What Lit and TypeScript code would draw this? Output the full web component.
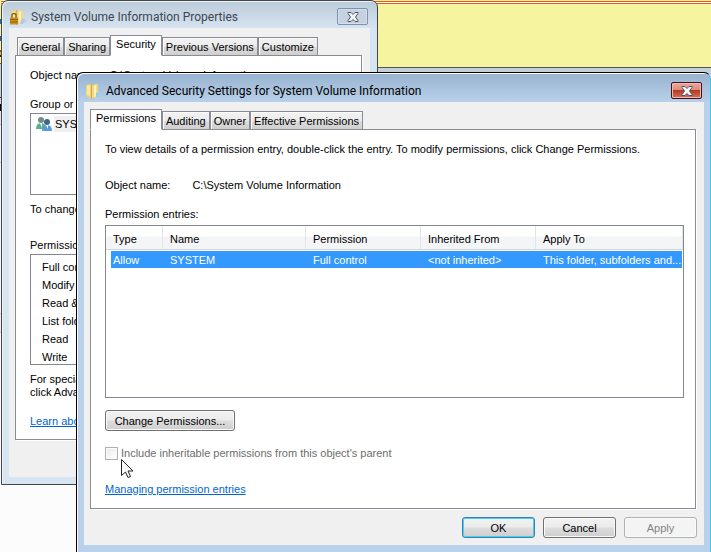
import { LitElement, html, css, svg } from "lit";
import { customElement, property } from "lit/decorators.js";

const folder = svg`
  <path d="M2 2l5-1v14l-5-2z" fill="#efd277"/>
  <path d="M7 1l2 1v13l-2 1z" fill="#d2a93f"/>
  <path d="M8 2l5-1 1 1v12l-6 1z" fill="#f1da84"/>
  <path d="M3 3l3-1v11l-3-1z" fill="#f9e9a6"/>
  <path d="M10 3l2-1v11l-2 1z" fill="#fbf1c0"/>`;

@customElement("win-frame")
export class WinFrame extends LitElement {
  @property() heading = "";
  @property({ type: Boolean, reflect: true }) active = false;
  @property({ type: Boolean }) locked = false;

  static styles = css`
    :host {
      display: flex;
      flex-direction: column;
      box-sizing: border-box;
      border: 1px solid #454545;
      border-radius: 7px 7px 0 0;
      background: linear-gradient(#bccbd9, #d7e4f2 28px);
      box-shadow: inset 1px 1px 0 #eef4fa;
      padding: 0 7px 7px;
    }
    :host([active]) {
      border-color: #000 #3fc8ea #000 #000;
      background: linear-gradient(#98b3d0, #b9d1ea 30px);
      box-shadow: inset 1px 1px 0 #fff;
      padding-right: 6px;
    }
    header {
      display: flex;
      align-items: center;
      height: 27px;
      padding-top: 4px;
      box-sizing: border-box;
    }
    :host([active]) header {
      height: 29px;
      padding-top: 6px;
    }
    header svg {
      flex: none;
    }
    h1 {
      flex: 1;
      margin: 0 0 0 4px;
      font: 12px/16px Roboto, "Noto Sans", sans-serif;
      color: #3c4650;
      white-space: nowrap;
    }
    :host([active]) h1 {
      color: #000;
    }
    .close {
      display: grid;
      place-items: center;
      width: 31px;
      height: 17px;
      margin-right: 2px;
      padding: 0;
      border: 1px solid #8291ab;
      border-radius: 2px;
      background: #c4d2e1;
      box-shadow: inset 0 0 0 1px #d3dfeb;
    }
    :host([active]) .close {
      border-color: #42101f;
      background: linear-gradient(#e7a99d, #dd8a7b 48%, #b73a20 50%, #cf7462);
      box-shadow: inset 0 0 0 1px #f0b9ae;
    }
    main {
      flex: 1;
      display: flex;
      flex-direction: column;
      background: #f0f0f0;
    }
  `;

  render() {
    return html`
      <header>
        <svg width="18" height="16" viewBox="0 0 18 16" aria-hidden="true">
          ${folder}
          ${this.locked
            ? svg`<path d="M12 10l3-1 2 3-3 3h-3z" fill="#b9cbd9"/>
                <path d="M3 9V6.500a2 2 0 0 1 4 0V9" fill="none" stroke="#8a6a1c" stroke-width="1.500"/>
                <rect x="1" y="8.500" width="8" height="7" fill="#c8921c"/>
                <path d="M1 10.500h8M1 13h8" stroke="#8d5f0c"/>`
            : svg`<path d="M12 10l2-1v5h-2z" fill="#8fd0e6"/>`}
        </svg>
        <h1>${this.heading}</h1>
        <button class="close" aria-label="Close">
          <svg width="12" height="10" viewBox="0 0 12 10" aria-hidden="true">
            <path d="M1 .5h3l2 2 2-2h3v1L8.500 5 11 8.500v1H8l-2-2-2 2H1v-1L3.500 5 1 1.500z"
              fill="#f4f4f4" stroke="#4c5468"/>
          </svg>
        </button>
      </header>
      <main><slot></slot></main>
    `;
  }
}

@customElement("tab-strip")
export class TabStrip extends LitElement {
  @property({ type: Array }) tabs: string[] = [];
  @property() selected = "";

  static styles = css`
    :host {
      display: flex;
      align-items: flex-end;
      position: relative;
      z-index: 1;
      padding-left: 2px;
      margin-bottom: -1px;
    }
    button {
      height: 19px;
      margin: 0;
      padding: 0 3px;
      border: 1px solid #898c95;
      background: linear-gradient(#f3f3f3, #ebebeb 50%, #dddddd 51%, #cfcfcf);
      box-shadow: inset 1px 1px 0 #fcfcfc;
      font: 11px/16px "Liberation Sans", Arial, sans-serif;
      color: #000;
      white-space: nowrap;
    }
    .on {
      height: 21px;
      padding: 0 5px 3px;
      border-bottom-color: #fff;
      background: #fff;
    }
    .on:first-child {
      margin-left: -2px;
    }
  `;

  render() {
    return this.tabs.map(
      (t) => html`<button role="tab" aria-selected=${t === this.selected} class=${t === this.selected ? "on" : ""}>${t}</button>`
    );
  }
}

@customElement("app-root")
export class AppRoot extends LitElement {
  static styles = css`
    :host {
      display: block;
      position: relative;
      min-height: 100vh;
      overflow: hidden;
      background: #fcfcfc;
      font: 11px/13px "Liberation Sans", Arial, sans-serif;
      color: #000;
    }
    .sheet {
      height: 68px;
      box-sizing: border-box;
      border-bottom: 1px solid #555;
      background: linear-gradient(#f6f49f 1px, #e85a1c 1px 2px, #fff 2px 3px, #e85a1c 3px 4px, #f6f49f 4px);
    }
    .bar {
      height: 57px;
      background: #c3d0dc;
    }
    .edge {
      position: absolute;
      left: 0;
      top: 0;
      width: 1px;
      height: 335px;
      background: linear-gradient(
        #f6f49f 19px, #1f6fa8 19px 24px, #f6f49f 24px 36px, #2a62b0 36px 41px, #f6f49f 41px 50px,
        #c33a1c 50px 52px, #f0b030 52px 55px, #222 55px 57px, #f6f49f 57px 63px, #555 63px 64px,
        #b9cfe6 64px 97px, #333 97px 98px, #c9d8e8 98px 104px, #000 104px 111px, #dbe6f2 111px 124px,
        #a9bccf 124px 125px, #eaf1f8 125px 162px, #b5c5d6 162px 163px, #f4f7fa 163px 313px,
        #d0d0d0 313px 314px, #eee 314px 332px, #d0d0d0 332px 333px, #fcfcfc 333px);
    }
    .back {
      position: absolute;
      left: 1px;
      top: 0;
      width: 377px;
      height: 485px;
    }
    .front {
      position: absolute;
      left: 76px;
      right: 0;
      top: 72px;
      height: 481px;
    }
    p {
      margin: 0;
      white-space: nowrap;
    }
    a {
      color: #0066cc;
    }
    .body {
      flex: 1;
      display: flex;
      flex-direction: column;
      padding: 7px 7px 0 6px;
    }
    .panel {
      display: flex;
      flex-direction: column;
      align-items: flex-start;
      box-sizing: border-box;
      margin-right: 1px;
      border: 1px solid #898c95;
      background: #fff;
      box-shadow: 1px 1px 0 #fff;
      padding: 13px 11px 0 14px;
    }
    .back .panel {
      height: 385px;
    }
    .front .panel {
      height: 380px;
    }
    .pair {
      display: flex;
      gap: 22px;
    }
    .back .pair {
      gap: 14px;
    }
    .box {
      align-self: stretch;
      box-sizing: border-box;
      margin: 0;
      padding: 0;
      border: 1px solid #828790;
      list-style: none;
    }
    .users {
      height: 82px;
      padding: 2px 5px;
    }
    .users li {
      display: flex;
      align-items: center;
      gap: 1px;
    }
    .users span {
      background: #f0f0f0;
      line-height: 16px;
      padding: 0 1px;
    }
    .rights {
      height: 111px;
      padding: 3px 11px;
      line-height: 18px;
    }
    .gap-s { margin-top: 2px; }
    .gap-m { margin-top: 8px; }
    .gap-l { margin-top: 16px; }
    .gap-xl { margin-top: 23px; }
    .entries {
      height: 173px;
      margin-top: 4px;
    }
    table {
      width: 100%;
      table-layout: fixed;
      border-collapse: separate;
      border-spacing: 0;
    }
    th, td {
      padding: 0 0 0 7px;
      font-weight: normal;
      text-align: left;
      white-space: nowrap;
      overflow: hidden;
    }
    th {
      height: 24px;
      box-sizing: border-box;
      padding-top: 3px;
      border-right: 1px solid #e2e4e7;
      border-bottom: 1px solid #d5d5d5;
      background: linear-gradient(#fff 45%, #f4f5f6 46%);
    }
    td {
      height: 17px;
      padding-top: 1px;
      box-sizing: border-box;
      height: 18px;
      border-top: 1px solid #fff;
      background: #3399ff;
      color: #fff;
    }
    td:first-child {
      border-left: 5px solid #fff;
      padding-left: 2px;
    }
    td:last-child {
      border-right: 1px solid #fff;
    }
    .c1 { width: 57px; }
    .c2 { width: 143px; }
    .c3, .c4 { width: 115px; }
    .btn {
      width: 73px;
      height: 21px;
      padding: 0;
      border: 1px solid #707070;
      border-radius: 3px;
      background: linear-gradient(#f2f2f2, #ebebeb 49%, #dddddd 51%, #cfcfcf);
      box-shadow: inset 0 0 0 1px #fafafa;
      font: 11px/16px "Liberation Sans", Arial, sans-serif;
      color: #000;
    }
    .btn.wide {
      width: 130px;
      margin-top: 12px;
    }
    .btn.main {
      border-color: #3c7fb1;
      box-shadow: inset 0 0 0 1px #48d0f5;
    }
    .btn:disabled {
      border-color: #adb2b5;
      background: #f4f4f4;
      color: #838383;
    }
    .check {
      display: flex;
      align-items: center;
      gap: 3px;
      margin-top: 16px;
      color: #6d6d6d;
      white-space: nowrap;
    }
    .check input {
      appearance: none;
      width: 13px;
      height: 13px;
      margin: 0;
      border: 1px solid #b1b1b1;
      background: linear-gradient(135deg, #ebebeb, #fff);
      box-shadow: inset 0 0 0 1px #fafafa;
    }
    footer {
      display: flex;
      justify-content: flex-end;
      gap: 8px;
      padding-top: 8px;
    }
    .cursor {
      position: absolute;
      left: 121px;
      top: 459px;
    }
  `;

  render() {
    return html`
      <div class="sheet"></div>
      <div class="bar"></div>
      <div class="edge"></div>

      <win-frame class="back" heading="System Volume Information Properties" locked>
        <div class="body">
          <tab-strip .tabs=${["General", "Sharing", "Security", "Previous Versions", "Customize"]} selected="Security"></tab-strip>
          <section class="panel">
            <div class="pair"><p>Object name:</p><p>C:\\System Volume Information</p></div>
            <p class="gap-l">Group or user names:</p>
            <ul class="box users gap-s">
              <li>
                <svg width="17" height="16" viewBox="0 0 17 16" aria-hidden="true">
                  <circle cx="5" cy="4" r="3" fill="#6f8f87"/>
                  <path d="M0 13q0-6 5-6t5 6z" fill="#5fae8b"/>
                  <path d="M4 7h2v5z" fill="#fff"/>
                  <circle cx="11" cy="6" r="3" fill="#41658a"/>
                  <path d="M6 15q0-6 5-6t5 6z" fill="#5b9bdb"/>
                  <path d="M10 9h2v4z" fill="#fff"/>
                </svg>
                <span>SYSTEM</span>
              </li>
            </ul>
            <p class="gap-m">To change permissions, click Edit.</p>
            <p class="gap-xl">Permissions for SYSTEM</p>
            <ul class="box rights gap-s">
              ${["Full control", "Modify", "Read & execute", "List folder contents", "Read", "Write"].map((r) => html`<li>${r}</li>`)}
            </ul>
            <p class="gap-m">For special permissions or advanced settings,<br />click Advanced.</p>
            <p class="gap-l"><a href="#learn">Learn about access control and permissions</a></p>
          </section>
        </div>
      </win-frame>

      <win-frame class="front" heading="Advanced Security Settings for System Volume Information" active>
        <div class="body">
          <tab-strip .tabs=${["Permissions", "Auditing", "Owner", "Effective Permissions"]} selected="Permissions"></tab-strip>
          <section class="panel">
            <p>To view details of a permission entry, double-click the entry. To modify permissions, click Change Permissions.</p>
            <div class="pair gap-xl"><p>Object name:</p><p>C:\\System Volume Information</p></div>
            <p class="gap-l">Permission entries:</p>
            <div class="box entries">
              <table>
                <thead>
                  <tr><th class="c1">Type</th><th class="c2">Name</th><th class="c3">Permission</th><th class="c4">Inherited From</th><th>Apply To</th></tr>
                </thead>
                <tbody>
                  <tr><td>Allow</td><td>SYSTEM</td><td>Full control</td><td>&lt;not inherited&gt;</td><td>This folder, subfolders and...</td></tr>
                </tbody>
              </table>
            </div>
            <button class="btn wide">Change Permissions...</button>
            <label class="check"><input type="checkbox" disabled />Include inheritable permissions from this object's parent</label>
            <p class="gap-xl"><a href="#managing">Managing permission entries</a></p>
          </section>
          <footer>
            <button class="btn main">OK</button>
            <button class="btn">Cancel</button>
            <button class="btn" disabled>Apply</button>
          </footer>
        </div>
      </win-frame>

      <svg class="cursor" width="13" height="20" viewBox="0 0 13 20" aria-hidden="true">
        <path d="M.5.5v16l4-3.500 2.500 5.500 2.500-1-2.500-5.500h5z" fill="#fff" stroke="#222"/>
      </svg>
    `;
  }
}
